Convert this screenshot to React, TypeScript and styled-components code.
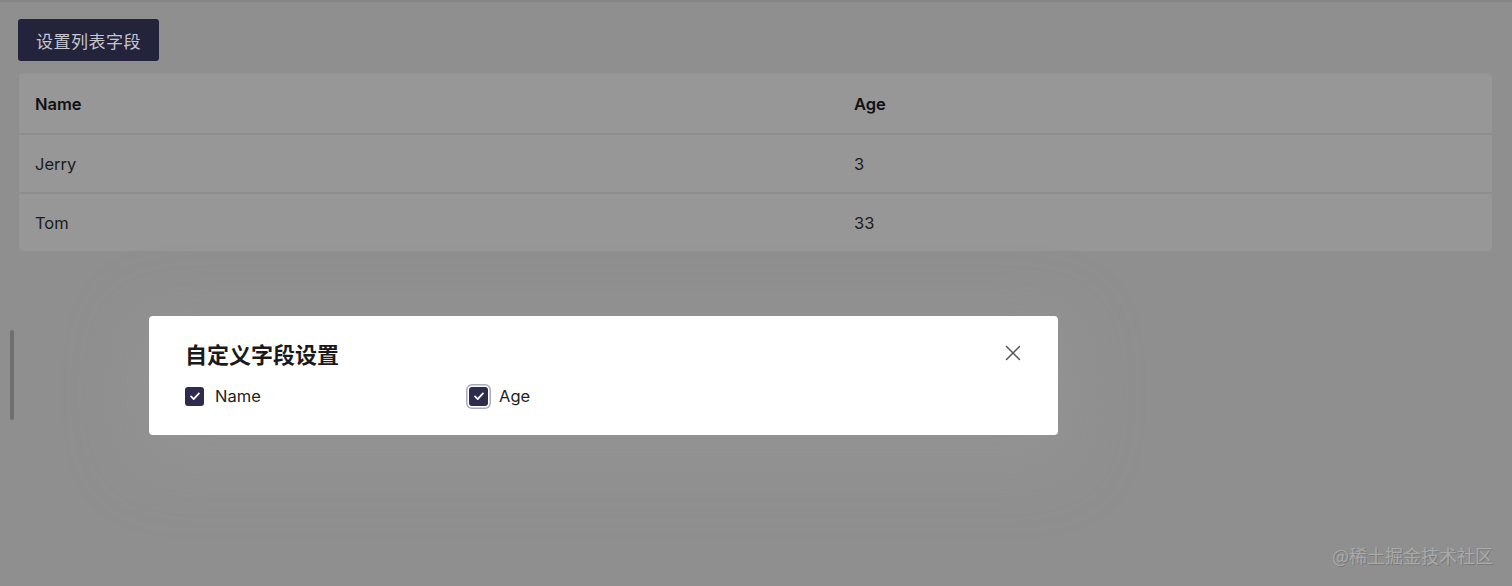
import React, { useState } from "react";
import styled, { createGlobalStyle } from "styled-components";

const GlobalStyle = createGlobalStyle`
  html, body {
    margin: 0;
    padding: 0;
    background: #8f8f8f;
    font-family: Inter, "Noto Sans", "Noto Sans CJK SC", sans-serif;
  }
  #root {
    min-height: 586px;
  }
`;

// ===================== PAGE (dimmed under the mask) =====================
const Page = styled.div`
  position: relative;
  width: 1512px;
  height: 586px;
  box-sizing: border-box;
  padding: 19px 20px 0 18px;
  background: #8f8f8f;
  box-shadow: inset 0 2px 0 #868686;
  overflow: hidden;
`;

const FieldButton = styled.button`
  display: flex;
  align-items: center;
  justify-content: center;
  width: 141px;
  height: 42px;
  border: none;
  border-radius: 3px;
  background: #24233c;
  color: #c6c6cf;
  font-family: "Noto Sans CJK SC", sans-serif;
  font-size: 17px;
  letter-spacing: 0.5px;
  cursor: pointer;
`;

const Table = styled.div`
  margin: 13px 0 0 1px;
  border-radius: 4px;
  background: #979797;
  box-shadow: 0 -1px 0 #939393;
  overflow: hidden;
`;

const Row = styled.div<{ $head?: boolean }>`
  display: grid;
  grid-template-columns: 819px 1fr;
  box-sizing: border-box;
  height: 59px;
  align-items: center;
  font-size: 16.5px;
  font-weight: ${({ $head }) => ($head ? 600 : 400)};
  color: ${({ $head }) => ($head ? "#111" : "#1c1c1c")};

  & + & {
    border-top: 2px solid #8d8d8d;
  }
`;

const Cell = styled.div`
  padding-left: 16px;
`;

const Scrollbar = styled.div`
  position: absolute;
  left: 10px;
  top: 330px;
  width: 4px;
  height: 90px;
  border-radius: 2px;
  background: #6f6f6f;
`;

const Watermark = styled.div`
  position: absolute;
  right: 19px;
  bottom: 18px;
  font-family: "Noto Sans CJK SC", sans-serif;
  font-size: 18px;
  color: #a9a9a9;
  text-shadow: 1px 1px 0 #7a7a7a;
`;

// ===================== MODAL =====================
const Halo = styled.div`
  position: absolute;
  left: 149px;
  top: 316px;
  width: 909px;
  height: 119px;
  border-radius: 4px;
  box-shadow: 0 16px 70px 20px rgba(165, 165, 165, 0.18);
`;

const Dialog = styled.div`
  position: absolute;
  left: 149px;
  top: 316px;
  width: 909px;
  height: 119px;
  box-sizing: border-box;
  padding: 22px 36px 0 36px;
  border-radius: 4px;
  background: #ffffff;
`;

const DialogHeader = styled.div`
  display: flex;
  align-items: center;
  justify-content: space-between;
`;

const DialogTitle = styled.h2`
  margin: 0;
  font-family: "Noto Sans CJK SC", sans-serif;
  font-size: 22px;
  font-weight: 700;
  line-height: 30px;
  color: #1a1a1a;
`;

const CloseButton = styled.button`
  display: flex;
  padding: 0;
  margin-right: -1px;
  border: none;
  background: none;
  color: #555;
  cursor: pointer;
`;

const Options = styled.div`
  display: grid;
  grid-template-columns: 284px 284px;
  margin-top: 18px;
`;

const Option = styled.label`
  display: flex;
  align-items: center;
  gap: 11px;
  font-size: 16.5px;
  color: #222;
  cursor: pointer;
`;

const Box = styled.span<{ $focus?: boolean }>`
  display: flex;
  align-items: center;
  justify-content: center;
  width: 19px;
  height: 19px;
  border-radius: 3px;
  background: #2d2c4f;
  box-shadow: ${({ $focus }) =>
    $focus ? "0 0 0 1.5px #ffffff, 0 0 0 3px #a9a9c4" : "none"};
`;

const Check = () => (
  <svg width="14" height="14" viewBox="0 0 16 16" fill="none">
    <path
      d="M3.5 8.5l3 3 6-6.5"
      stroke="#fff"
      strokeWidth="2"
      strokeLinecap="round"
      strokeLinejoin="round"
    />
  </svg>
);

const rows = [
  { name: "Jerry", age: 3 },
  { name: "Tom", age: 33 },
];

const App: React.FC = () => {
  const [fields] = useState(["Name", "Age"]);

  return (
    <>
      <GlobalStyle />
      <Page>
        <FieldButton>设置列表字段</FieldButton>
        <Table>
          <Row $head>
            <Cell>Name</Cell>
            <Cell>Age</Cell>
          </Row>
          {rows.map((r) => (
            <Row key={r.name}>
              <Cell>{r.name}</Cell>
              <Cell>{r.age}</Cell>
            </Row>
          ))}
        </Table>

        <Scrollbar />
        <Halo />
        <Dialog>
          <DialogHeader>
            <DialogTitle>自定义字段设置</DialogTitle>
            <CloseButton aria-label="close">
              <svg width="20" height="20" viewBox="0 0 20 20" fill="none">
                <path
                  d="M3.5 3.5l13 13M16.5 3.5l-13 13"
                  stroke="#555"
                  strokeWidth="1.5"
                  strokeLinecap="round"
                />
              </svg>
            </CloseButton>
          </DialogHeader>
          <Options>
            {fields.map((f, i) => (
              <Option key={f}>
                <Box $focus={i === 1}>
                  <Check />
                </Box>
                {f}
              </Option>
            ))}
          </Options>
        </Dialog>

        <Watermark>@稀土掘金技术社区</Watermark>
      </Page>
    </>
  );
};

export default App;
